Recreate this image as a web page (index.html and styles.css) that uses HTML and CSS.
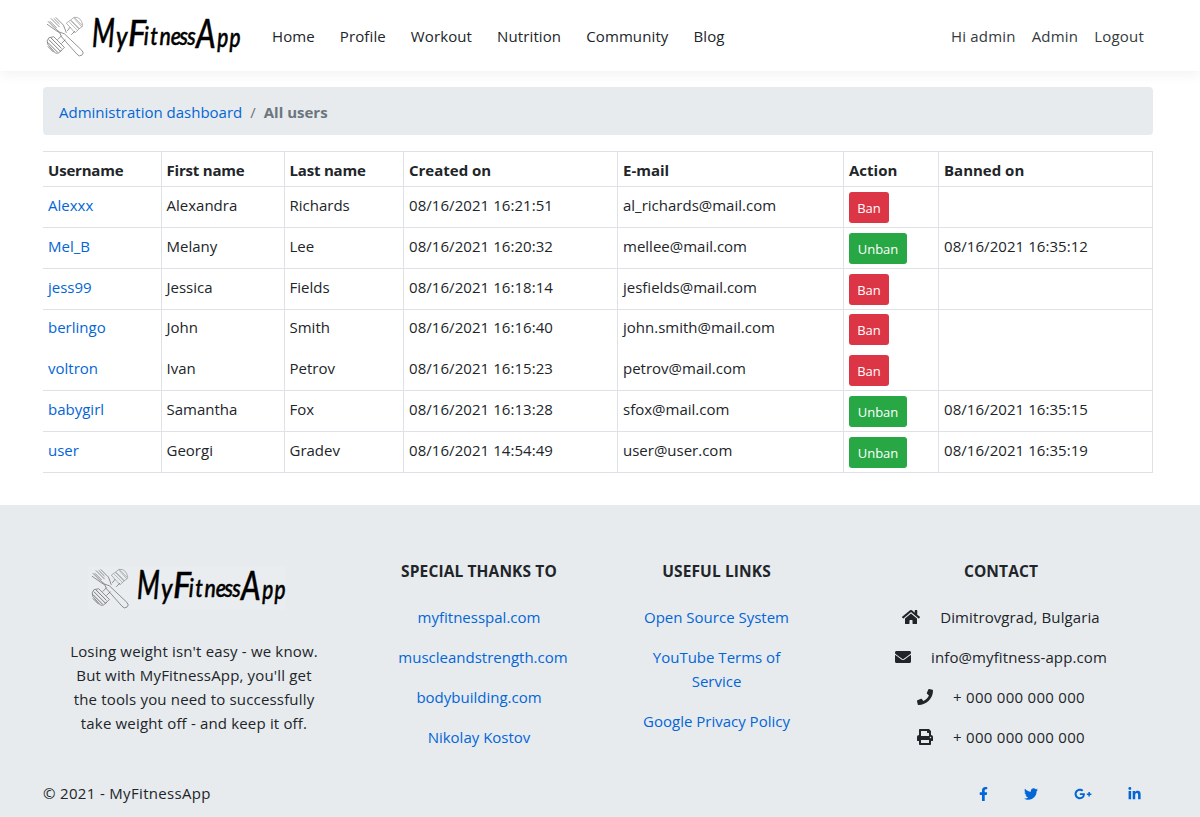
FILE: index.html
```html
<!DOCTYPE html>
<html lang="en">
<head>
<meta charset="utf-8">
<title>All users - MyFitnessApp</title>
<link rel="stylesheet" href="styles.css">
</head>
<body>
<header class="header">
  <nav class="container navbar">
    <a class="brand" href="#" aria-label="MyFitnessApp">
      <svg width="200" height="44" viewBox="0 0 200 44">
        <g id="logo">
          <g transform="translate(1 -1.5) scale(.97)" fill="none" stroke="#555" stroke-width=".65" stroke-linejoin="round">
            <path d="M3 9l8 8q4 4 9 5l18 17q3 3 0 5t-5-1L17 25q-1-5-5-6L2 12M6 6l9 9M5 9l7 7M9 6l6 6M11 5l8 8q2 5 3 8"/>
            <path d="M23 19l3-4M27 23l4-4M13 28l4-4M17 32l4-4"/>
            <path stroke="#888" d="M22 11l4-3 9 9-4 4zM26 8l4-3 9 9-4 3M30 5q7-1 9 8"/>
            <path d="M4 26l5-1 11 11-4 4M4 26q-3 3-1 7l8 9q3 1 6-3"/>
            <path stroke="#333" d="M6 26l11 11M4 28l12 12M3 31l10 10M3 35l6 6"/>
            <path stroke="#999" d="M25 10l9 9M27 8l9 9M30 6l8 9"/>
          </g>
          <g class="wordmark">
            <text font-size="40" transform="translate(48 33) scale(.66 1)">M</text>
            <text font-size="28" transform="translate(72 33) scale(.85 1)">y</text>
            <text font-size="37" transform="translate(84 32) scale(.92 1)">F</text>
            <text font-size="25" transform="translate(0 31) scale(.85 1)" x="117.5 125 136 149 159.5 168.5">itness</text>
            <text font-size="40" transform="translate(152 34) scale(.77 1)">A</text>
            <text font-size="26" transform="translate(0 33) scale(.8 1)" x="216.5 232">pp</text>
          </g>
        </g>
      </svg>
    </a>
    <ul class="nav main-nav">
      <li>Home</li><li>Profile</li><li>Workout</li><li>Nutrition</li><li>Community</li><li>Blog</li>
    </ul>
    <ul class="nav user-nav"><li>Hi admin</li><li>Admin</li><li>Logout</li></ul>
  </nav>
</header>

<main class="container">
  <nav class="breadcrumb"><a href="#">Administration dashboard</a><span class="slash">/</span><b>All users</b></nav>
  <table class="users">
    <colgroup><col class="c1"><col class="c2"><col class="c3"><col class="c4"><col class="c5"><col class="c6"><col class="c7"></colgroup>
    <thead><tr><th>Username</th><th>First name</th><th>Last name</th><th class="wide">Created on</th><th class="wide">E-mail</th><th class="wide">Action</th><th class="wide">Banned on</th></tr></thead>
    <tbody>
      <tr><td><a href="#">Alexxx</a></td><td>Alexandra</td><td>Richards</td><td>08/16/2021 16:21:51</td><td>al_richards@mail.com</td><td><button class="btn ban">Ban</button></td><td></td></tr>
      <tr><td><a href="#">Mel_B</a></td><td>Melany</td><td>Lee</td><td>08/16/2021 16:20:32</td><td>mellee@mail.com</td><td><button class="btn unban">Unban</button></td><td>08/16/2021 16:35:12</td></tr>
      <tr><td><a href="#">jess99</a></td><td>Jessica</td><td>Fields</td><td>08/16/2021 16:18:14</td><td>jesfields@mail.com</td><td><button class="btn ban">Ban</button></td><td></td></tr>
      <tr class="joined"><td><a href="#">berlingo</a></td><td>John</td><td>Smith</td><td>08/16/2021 16:16:40</td><td>john.smith@mail.com</td><td><button class="btn ban">Ban</button></td><td></td></tr>
      <tr><td><a href="#">voltron</a></td><td>Ivan</td><td>Petrov</td><td>08/16/2021 16:15:23</td><td>petrov@mail.com</td><td><button class="btn ban">Ban</button></td><td></td></tr>
      <tr><td><a href="#">babygirl</a></td><td>Samantha</td><td>Fox</td><td>08/16/2021 16:13:28</td><td>sfox@mail.com</td><td><button class="btn unban">Unban</button></td><td>08/16/2021 16:35:15</td></tr>
      <tr><td><a href="#">user</a></td><td>Georgi</td><td>Gradev</td><td>08/16/2021 14:54:49</td><td>user@user.com</td><td><button class="btn unban">Unban</button></td><td>08/16/2021 16:35:19</td></tr>
    </tbody>
  </table>
</main>

<footer class="footer">
  <div class="columns">
    <section class="about">
      <svg class="footer-logo" width="200" height="44"><use href="#logo"/></svg>
      <p>Losing weight isn't easy - we know.<br>But with MyFitnessApp, you'll get<br>the tools you need to successfully<br>take weight off - and keep it off.</p>
    </section>
    <section>
      <h6>SPECIAL THANKS TO</h6>
      <p><a href="#">myfitnesspal.com</a></p><p class="overhang"><a href="#">muscleandstrength.com</a></p><p><a href="#">bodybuilding.com</a></p><p><a href="#">Nikolay Kostov</a></p>
    </section>
    <section>
      <h6>USEFUL LINKS</h6>
      <p><a href="#">Open Source System</a></p><p><a href="#">YouTube Terms of<br>Service</a></p><p><a href="#">Google Privacy Policy</a></p>
    </section>
    <section class="contact">
      <h6>CONTACT</h6>
      <p><svg width="18" height="16" viewBox="0 0 576 512"><path d="M280.4 148.3L96 300.1V464a16 16 0 0 0 16 16l112.1-.3a16 16 0 0 0 15.9-16V368a16 16 0 0 1 16-16h64a16 16 0 0 1 16 16v95.6a16 16 0 0 0 16 16.1L464 480a16 16 0 0 0 16-16V300L295.7 148.3a12.2 12.2 0 0 0-15.3 0zM571.6 251.5L488 182.6V44.1a12 12 0 0 0-12-12h-56a12 12 0 0 0-12 12v72.6L318.5 43a48 48 0 0 0-61 0L4.3 251.5a12 12 0 0 0-1.6 16.9l25.5 31a12 12 0 0 0 16.9 1.6l235.3-193.7a12.2 12.2 0 0 1 15.3 0L530.9 301a12 12 0 0 0 16.9-1.6l25.5-31a12 12 0 0 0-1.7-16.9z"/></svg>Dimitrovgrad, Bulgaria</p>
      <p><svg width="16" height="16" viewBox="0 0 512 512"><path d="M502.3 190.8c3.9-3.1 9.7-.2 9.7 4.7V400c0 26.5-21.5 48-48 48H48c-26.5 0-48-21.5-48-48V195.6c0-5 5.7-7.8 9.7-4.7 22.4 17.4 52.1 39.5 154.1 113.6 21.1 15.4 56.7 47.8 92.2 47.6 35.7.3 72-32.8 92.3-47.6 102-74.1 131.6-96.3 154-113.7zM256 320c23.2.4 56.6-29.2 73.4-41.4 132.7-96.3 142.8-104.7 173.4-128.7 5.8-4.5 9.2-11.5 9.2-18.9v-19c0-26.5-21.5-48-48-48H48c-26.5 0-48 21.5-48 48v19c0 7.4 3.4 14.3 9.2 18.9 30.6 23.9 40.7 32.4 173.4 128.7 16.8 12.2 50.2 41.8 73.4 41.4z"/></svg>info@myfitness-app.com</p>
      <p class="phone"><svg width="16" height="16" viewBox="0 0 512 512"><path d="M493.4 24.6l-104-24c-11.3-2.6-22.9 3.3-27.5 13.9l-48 112c-4.2 9.8-1.4 21.3 6.9 28l60.6 49.6c-36 76.7-98.9 140.5-177.2 177.2l-49.6-60.6c-6.8-8.3-18.2-11.1-28-6.9l-112 48C3.9 366.5-2 378.1.6 389.4l24 104C27.1 504.2 36.7 512 48 512c256.1 0 464-207.5 464-464 0-11.2-7.7-20.9-18.6-23.4z"/></svg>+ 000 000 000 000</p>
      <p class="phone"><svg width="16" height="16" viewBox="0 0 512 512"><path d="M448 192V77.3c0-8.5-3.4-16.6-9.4-22.6L393.4 9.4c-6-6-14.1-9.4-22.6-9.4H96C78.3 0 64 14.3 64 32v160c-35.3 0-64 28.7-64 64v112c0 8.8 7.2 16 16 16h48v96c0 17.7 14.3 32 32 32h320c17.7 0 32-14.3 32-32v-96h48c8.8 0 16-7.2 16-16V256c0-35.3-28.7-64-64-64zM384 448H128v-96h256v96zm0-224H128V64h192v48c0 8.8 7.2 16 16 16h48v96zm48 72c-13.3 0-24-10.8-24-24s10.7-24 24-24 24 10.7 24 24-10.7 24-24 24z"/></svg>+ 000 000 000 000</p>
    </section>
  </div>
  <div class="container bottom">
    <span>© 2021 - MyFitnessApp</span>
    <div class="social">
      <svg width="9" height="14" viewBox="0 0 320 512"><path d="M279.1 288l14.3-92.7h-89V135.2c0-25.3 12.4-50 52.2-50H297V6.3S260.4 0 225.4 0C152.2 0 104.4 44.4 104.4 124.7v70.6H23V288h81.4v224h100.2V288z"/></svg>
      <svg width="14" height="14" viewBox="0 0 512 512"><path d="M459.4 151.7c.3 4.5.3 9.1.3 13.6 0 138.7-105.6 298.6-298.6 298.6-59.5 0-114.7-17.2-161.1-47.1 8.4 1 16.6 1.3 25.3 1.3 49.1 0 94.2-16.6 130.3-44.8-46.1-1-84.8-31.2-98.1-72.8 6.5 1 13 1.6 19.8 1.6 9.4 0 18.8-1.3 27.6-3.6-48.1-9.7-84.1-52-84.1-103v-1.3c14 7.8 30.2 12.7 47.4 13.3-28.3-18.8-46.8-51-46.8-87.4 0-19.5 5.2-37.4 14.3-53 51.7 63.7 129.3 105.3 216.4 109.8-1.6-7.8-2.6-15.9-2.6-24 0-57.8 46.8-104.9 104.9-104.9 30.2 0 57.5 12.7 76.7 33.1 23.7-4.5 46.5-13.3 66.6-25.3-7.8 24.4-24.4 44.8-46.1 57.8 21.1-2.3 41.6-8.1 60.4-16.2-14.3 20.8-32.2 39.3-52.6 54.3z"/></svg>
      <svg width="18" height="14" viewBox="0 0 640 512"><path d="M386.1 228.5c1.8 9.7 3.1 19.4 3.1 32C389.2 370.2 315.6 448 204.8 448c-106.1 0-192-85.9-192-192s85.9-192 192-192c51.9 0 95.1 18.9 128.6 50.3l-52.1 50c-14.1-13.6-39-29.6-76.5-29.6-65.5 0-118.9 54.2-118.9 121.3s53.4 121.3 118.9 121.3c76 0 104.5-54.7 109-82.8H204.8v-66zm185.4 6.4v-55.7h-56v55.7h-55.7v56h55.7v55.7h56v-55.7h55.7v-56z"/></svg>
      <svg width="13" height="14" viewBox="0 0 448 512"><path d="M100.3 448H7.4V148.9h92.9zM53.8 108.1C24.1 108.1 0 83.5 0 53.8a53.8 53.8 0 0 1 107.6 0c0 29.7-24.1 54.3-53.8 54.3zM447.9 448h-92.7V302.4c0-34.7-.7-79.2-48.3-79.2-48.3 0-55.7 37.7-55.7 76.7V448h-92.8V148.9h89.1v40.8h1.3c12.4-23.5 42.7-48.3 87.9-48.3 94 0 111.3 61.9 111.3 142.3V448z"/></svg>
    </div>
  </div>
</footer>
</body>
</html>
```
FILE: styles.css
```css
* { box-sizing: border-box; }
body { margin: 0; background: #fff; color: #212529; font: 15px/24px "Open Sans", "Noto Sans", sans-serif; overflow: hidden; }
a { color: #0366d6; text-decoration: none; }
ul, p, h6 { margin: 0; padding: 0; }
.wordmark { fill: #000; stroke: #000; stroke-width: .5; font-family: Lato, sans-serif; font-style: italic; font-weight: 500; }
.container { width: 1110px; margin-left: 43px; }
.header { height: 71px; box-shadow: 0 4px 12px rgba(0,0,0,.05); }
.navbar { display: flex; height: 71px; align-items: center; }
.brand, .brand svg { display: block; overflow: visible; }
.brand { width: 229px; padding-left: 1px; }
.nav { display: flex; list-style: none; }
.main-nav { gap: 25px; letter-spacing: .11px; }
.user-nav { gap: 16px; margin-left: auto; margin-right: 9px; color: #343a40; letter-spacing: .2px; }
.breadcrumb { display: flex; align-items: center; height: 48px; margin-top: 16px; padding: 1px 16px 0; background: #e7ebee; border-radius: 4px; color: #6c757d; }
.slash { padding: 0 8px; }
.users { width: 1110px; margin-top: 16px; table-layout: fixed; border-collapse: separate; border-spacing: 0; border-top: 1px solid #dee2e6; }
.c1 { width: 119px; }
.c2 { width: 123px; }
.c3 { width: 119px; }
.c4 { width: 214px; }
.c5 { width: 226px; }
.c6 { width: 95px; }
.c7 { width: 214px; }
.users th, .users td { padding: 6px 5px 0; text-align: left; vertical-align: top; border-right: 1px solid #dee2e6; border-bottom: 1px solid #dee2e6; white-space: nowrap; }
.users th { height: 35px; letter-spacing: -.2px; }
.users th.wide { letter-spacing: 0; }
.users td { height: 41px; }
.users td:nth-child(4), .users td:nth-child(7) { letter-spacing: .06px; }
.users td:nth-child(2), .users td:nth-child(3), .users th:nth-child(2), .users th:nth-child(3) { padding-left: 4.5px; }
.users .joined td { height: 40px; padding-top: 5px; border-bottom: 0; }
.users td:nth-child(6) { padding-top: 5px; }
.users .joined td:nth-child(6) { padding-top: 4px; }
.btn { display: block; height: 31px; padding: 0 8px; border: 0; border-radius: 3px; color: #fff; font: 13px/20px "Open Sans", sans-serif; }
.ban { width: 40px; background: #dc3545; }
.unban { width: 58px; background: #28a745; }
.footer { height: 312px; margin-top: 32px; background: #e7ebee; }
.columns { display: grid; grid-template-columns: 302px 268px 207px 362px; height: 265px; padding: 54px 0 0 43px; text-align: center; }
.columns h6 { font-size: 15.5px; line-height: 24px; margin-bottom: 22px; letter-spacing: .12px; }
.columns p { margin-bottom: 16px; }
.columns .overhang { padding-left: 8px; }
.about p { letter-spacing: .17px; }
.footer-logo { display: block; width: 198px; margin: 7px auto 29px 45px; padding-left: 1px; overflow: visible; background: #eaedef; }
.contact p { letter-spacing: .1px; }
.contact .phone { letter-spacing: .28px; }
.contact svg { vertical-align: -2px; margin-right: 20px; fill: #212529; }
.bottom { display: flex; align-items: center; height: 46px; }
.bottom span { letter-spacing: .33px; }
.social { display: flex; align-items: center; gap: 36px; margin: 1px 12px 0 auto; fill: #0366d6; }
```
